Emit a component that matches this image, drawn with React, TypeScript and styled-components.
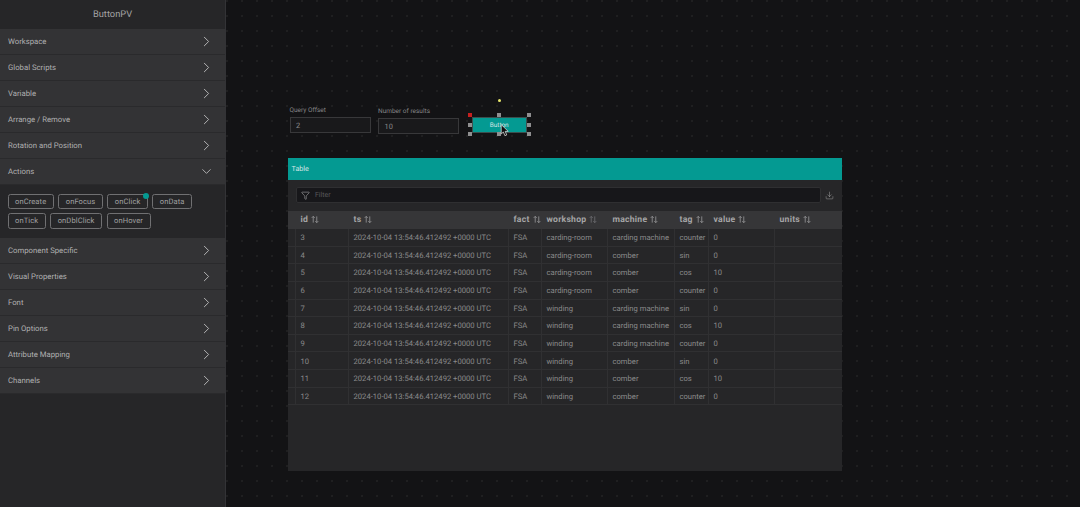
import React, { FC } from 'react';
import styled, { createGlobalStyle } from 'styled-components';
import { ChevronRight, ChevronDown, Download, Filter } from 'lucide-react';

const GlobalStyle = createGlobalStyle`
    html, body {
        margin: 0;
        padding: 0;
        height: 100%;
        background: #131315;
        overflow: hidden;
    }
    body, input {
        font-family: Roboto, 'Liberation Sans', sans-serif;
        text-rendering: geometricPrecision;
        -webkit-font-smoothing: antialiased;
    }
`;

const Page = styled.div`
    display: flex;
    width: 1080px;
    height: 507px;
    overflow: hidden;
`;

const Sidebar = styled.aside`
    width: 225px;
    height: 507px;
    flex: none;
    background: #262628;
    border-right: 1px solid #333336;
`;

const SidebarTitle = styled.div`
    height: 29px;
    display: flex;
    align-items: center;
    justify-content: center;
    font-size: 9.3px;
    color: #a2a2a3;
    background: #262628;
`;

const SectionRow = styled.div`
    height: 26px;
    box-sizing: border-box;
    display: flex;
    align-items: center;
    justify-content: space-between;
    padding: 0.4px 10.5px 0 8px;
    background: #333335;
    border-bottom: 1px solid #2a2a2c;
    font-size: 7.75px;
    color: #b0b0b1;
    svg {
        color: #b4b4b5;
    }
`;

const OpenChevron = styled(ChevronDown)`
    margin-right: 1px;
`;

const ActionPanel = styled.div`
    height: 53px;
    box-sizing: border-box;
    padding: 9px 7.5px 0;
    display: flex;
    flex-wrap: wrap;
    align-content: flex-start;
    gap: 4px 4.5px;
    background: #262628;
`;

const ActionChip = styled.div<{ $dot?: boolean }>`
    position: relative;
    height: 15.3px;
    box-sizing: border-box;
    padding: 0 6.5px;
    display: flex;
    align-items: center;
    border: 1px solid #707072;
    border-radius: 2.5px;
    font-size: 7.55px;
    letter-spacing: 0.1px;
    color: #a0a0a1;
    &::after {
        content: '';
        display: ${(p) => (p.$dot ? 'block' : 'none')};
        position: absolute;
        top: -2px;
        right: -1.7px;
        width: 6px;
        height: 6px;
        border-radius: 50%;
        background: #049a92;
    }
`;

const Canvas = styled.main`
    position: relative;
    flex: 1;
    height: 507px;
    background-color: #131315;
    background-image: radial-gradient(circle at 1px 1px, #262628 0.6px, transparent 0.9px);
    background-size: 15px 15px;
`;

const FieldWidget = styled.div<{ $left: number; $top: number }>`
    position: absolute;
    left: ${(p) => p.$left}px;
    top: ${(p) => p.$top}px;
    width: 81px;
`;

const FieldLabel = styled.div`
    font-size: 6.5px;
    line-height: 10px;
    color: #868687;
    margin-bottom: 2px;
`;

const FieldBox = styled.div`
    height: 16.4px;
    box-sizing: border-box;
    padding-left: 5.5px;
    display: flex;
    align-items: center;
    border: 1px solid #38383a;
    background: #19191b;
    font-size: 7.4px;
    color: #8a8a8b;
`;

const SelectedButton = styled.div`
    position: absolute;
    left: 245.5px;
    top: 116.7px;
    width: 55.5px;
    height: 16px;
    box-sizing: border-box;
    display: flex;
    align-items: center;
    justify-content: center;
    background: #049a92;
    border: 1px solid #3c4f4e;
    font-size: 6.4px;
    color: #d8e6e5;
`;

const Handle = styled.span<{ $left: number; $top: number; $red?: boolean }>`
    position: absolute;
    left: ${(p) => p.$left}px;
    top: ${(p) => p.$top}px;
    width: 3.5px;
    height: 3.5px;
    background: ${(p) => (p.$red ? '#c4201f' : '#8f8f90')};
`;

const RotateDot = styled.span`
    position: absolute;
    left: 271.5px;
    top: 99px;
    width: 3px;
    height: 3px;
    border-radius: 50%;
    background: #e9e86b;
`;

const CursorIcon = styled.svg`
    position: absolute;
    left: 274px;
    top: 124px;
`;

const TableWidget = styled.section`
    position: absolute;
    left: 62px;
    top: 158px;
    width: 554px;
    height: 313px;
    background: #262628;
`;

const TableTitle = styled.div`
    height: 21.5px;
    padding-left: 3.5px;
    display: flex;
    align-items: center;
    background: #049a92;
    font-size: 7.2px;
    color: #d5e5e4;
`;

const FilterBar = styled.div`
    height: 31px;
    box-sizing: border-box;
    padding: 0 8px;
    display: flex;
    align-items: center;
    gap: 4px;
    color: #b0b0b1;
`;

const FilterBox = styled.div`
    width: 525px;
    height: 16px;
    flex: none;
    box-sizing: border-box;
    padding-left: 3.5px;
    display: flex;
    align-items: center;
    gap: 5.5px;
    background: #17171a;
    border: 1px solid #2f2f31;
    border-radius: 2px;
    font-size: 7px;
    color: #57575a;
    svg {
        color: #a5a5a6;
    }
`;

const COLUMNS = '8px 53px 160px 33px 66px 67px 34px 66px 67px';

const HeaderRow = styled.div`
    display: grid;
    grid-template-columns: ${COLUMNS};
    height: 18.5px;
    background: #363638;
`;

const HeaderCell = styled.div`
    display: flex;
    align-items: center;
    gap: 3px;
    padding-left: 4.5px;
    font-size: 8.6px;
    font-weight: 700;
    letter-spacing: 0.25px;
    color: #a5a5a6;
`;

const BodyRow = styled.div`
    display: grid;
    grid-template-columns: ${COLUMNS};
    height: 17.65px;
    box-sizing: border-box;
    border-bottom: 1px solid #303032;
`;

const BodyCell = styled.div`
    display: flex;
    align-items: center;
    padding: 0.6px 0 0 4.5px;
    border-right: 1px solid #303032;
    font-size: 7.65px;
    color: #8a8a8b;
    white-space: nowrap;
    &:last-child {
        border-right: none;
    }
`;

const SortIcon: FC<{ active?: boolean }> = ({ active }) => (
    <svg width="8" height="9" viewBox="0 0 9 9" fill="none" stroke={active ? '#77777a' : '#a5a5a6'} strokeWidth="0.8">
        <path d="M2.5 8V1M.8 2.7 2.5 1l1.7 1.7" />
        <path d="M6.5 1v7M4.8 6.3 6.5 8l1.7-1.7" />
    </svg>
);

const sections = ['Workspace', 'Global Scripts', 'Variable', 'Arrange / Remove', 'Rotation and Position'];
const sectionsAfter = [
    'Component Specific',
    'Visual Properties',
    'Font',
    'Pin Options',
    'Attribute Mapping',
    'Channels',
];
const actions = ['onCreate', 'onFocus', 'onClick', 'onData', 'onTick', 'onDblClick', 'onHover'];
const headers = ['id', 'ts', 'fact', 'workshop', 'machine', 'tag', 'value', 'units'];

const TS = '2024-10-04 13:54:46.412492 +0000 UTC';
const rows = [
    ['3', 'carding-room', 'carding machine', 'counter', '0'],
    ['4', 'carding-room', 'comber', 'sin', '0'],
    ['5', 'carding-room', 'comber', 'cos', '10'],
    ['6', 'carding-room', 'comber', 'counter', '0'],
    ['7', 'winding', 'carding machine', 'sin', '0'],
    ['8', 'winding', 'carding machine', 'cos', '10'],
    ['9', 'winding', 'carding machine', 'counter', '0'],
    ['10', 'winding', 'comber', 'sin', '0'],
    ['11', 'winding', 'comber', 'cos', '10'],
    ['12', 'winding', 'comber', 'counter', '0'],
];

const handles = [
    { left: 242.25, top: 113.25, red: true },
    { left: 271.25, top: 113.25 },
    { left: 301.25, top: 113.25 },
    { left: 242.25, top: 123 },
    { left: 301.25, top: 123 },
    { left: 242.25, top: 132.25 },
    { left: 271.25, top: 132.25 },
    { left: 301.25, top: 132.25 },
];

const Section: FC<{ label: string; open?: boolean }> = ({ label, open }) => (
    <SectionRow>
        {label}
        {open ? <OpenChevron size={15} strokeWidth={1.5} /> : <ChevronRight size={17} strokeWidth={1.4} />}
    </SectionRow>
);

export default function App() {
    return (
        <Page>
            <GlobalStyle />
            <Sidebar>
                <SidebarTitle>ButtonPV</SidebarTitle>
                {sections.map((s) => (
                    <Section key={s} label={s} />
                ))}
                <Section label="Actions" open />
                <ActionPanel>
                    {actions.map((a) => (
                        <ActionChip key={a} $dot={a === 'onClick'}>
                            {a}
                        </ActionChip>
                    ))}
                </ActionPanel>
                {sectionsAfter.map((s) => (
                    <Section key={s} label={s} />
                ))}
            </Sidebar>
            <Canvas>
                <FieldWidget $left={63.5} $top={105}>
                    <FieldLabel>Query Offset</FieldLabel>
                    <FieldBox>2</FieldBox>
                </FieldWidget>
                <FieldWidget $left={152} $top={106}>
                    <FieldLabel>Number of results</FieldLabel>
                    <FieldBox>10</FieldBox>
                </FieldWidget>
                <RotateDot />
                <SelectedButton>Button</SelectedButton>
                {handles.map((h) => (
                    <Handle key={`${h.left}-${h.top}`} $left={h.left} $top={h.top} $red={h.red} />
                ))}
                <CursorIcon width="10" height="13" viewBox="0 0 9 12">
                    <path d="M1 .6v8.6l2-1.8 1.4 3.4 1.7-.7L4.7 6.8h2.8z" fill="#111" stroke="#ddd" strokeWidth="0.7" />
                </CursorIcon>
                <TableWidget>
                    <TableTitle>Table</TableTitle>
                    <FilterBar>
                        <FilterBox>
                            <Filter size={9} strokeWidth={1.6} />
                            <span>Filter</span>
                        </FilterBox>
                        <Download size={11} strokeWidth={1.2} />
                    </FilterBar>
                    <HeaderRow>
                        <HeaderCell />
                        {headers.map((h) => (
                            <HeaderCell key={h}>
                                {h}
                                <SortIcon active={h === 'workshop'} />
                            </HeaderCell>
                        ))}
                    </HeaderRow>
                    {rows.map(([id, workshop, machine, tag, value]) => (
                        <BodyRow key={id}>
                            <BodyCell />
                            <BodyCell>{id}</BodyCell>
                            <BodyCell>{TS}</BodyCell>
                            <BodyCell>FSA</BodyCell>
                            <BodyCell>{workshop}</BodyCell>
                            <BodyCell>{machine}</BodyCell>
                            <BodyCell>{tag}</BodyCell>
                            <BodyCell>{value}</BodyCell>
                            <BodyCell />
                        </BodyRow>
                    ))}
                </TableWidget>
            </Canvas>
        </Page>
    );
}
